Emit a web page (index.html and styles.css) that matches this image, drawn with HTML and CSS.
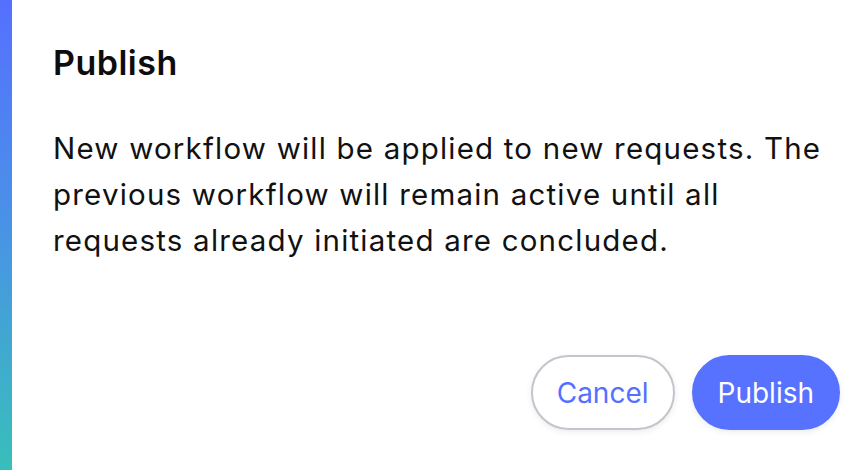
FILE: index.html
```html
<!DOCTYPE html>
<html lang="en">
<head>
<meta charset="utf-8">
<title>Publish</title>
<link rel="stylesheet" href="styles.css">
</head>
<body>
<div class="dialog">
  <div class="accent"></div>
  <div class="content">
    <h1 class="title">Publish</h1>
    <p class="message">New workflow will be applied to new requests. The previous workflow will remain active until all requests already initiated are concluded.</p>
    <div class="actions">
      <button class="btn btn-secondary">Cancel</button>
      <button class="btn btn-primary">Publish</button>
    </div>
  </div>
</div>
</body>
</html>
```
FILE: styles.css
```css
html, body {
  margin: 0;
  padding: 0;
  background: #ffffff;
}
body {
  font-family: Inter, "Noto Sans", "Liberation Sans", sans-serif;
  color: #111111;
}
.dialog {
  display: flex;
  width: 864px;
  height: 470px;
  background: #ffffff;
}
.accent {
  width: 12px;
  flex: none;
  background: linear-gradient(180deg, #5570ff 0%, #4a90e8 45%, #38bfba 100%);
}
.content {
  flex: 1;
  display: flex;
  flex-direction: column;
  padding: 42px 24px 40px 41px;
}
.title {
  margin: 0;
  font-size: 34px;
  font-weight: 600;
  letter-spacing: 0.5px;
  line-height: 1.21;
  color: #0d0d0d;
}
.message {
  margin: 42px 0 0 0;
  font-size: 29.5px;
  letter-spacing: 1.2px;
  line-height: 46px;
  font-weight: 400;
  color: #111111;
}
.actions {
  margin-top: auto;
  display: flex;
  justify-content: flex-end;
  gap: 17px;
}
.btn {
  height: 75px;
  padding: 0 24px;
  border-radius: 38px;
  font-family: inherit;
  font-size: 28px;
  font-weight: 400;
  cursor: pointer;
  box-shadow: 0 2px 6px rgba(0, 0, 0, 0.08);
}
.btn-secondary {
  background: #ffffff;
  border: 2px solid #c4c4cc;
  color: #5570ff;
}
.btn-primary {
  background: #5672ff;
  border: 2px solid #5672ff;
  color: #ffffff;
}
```
